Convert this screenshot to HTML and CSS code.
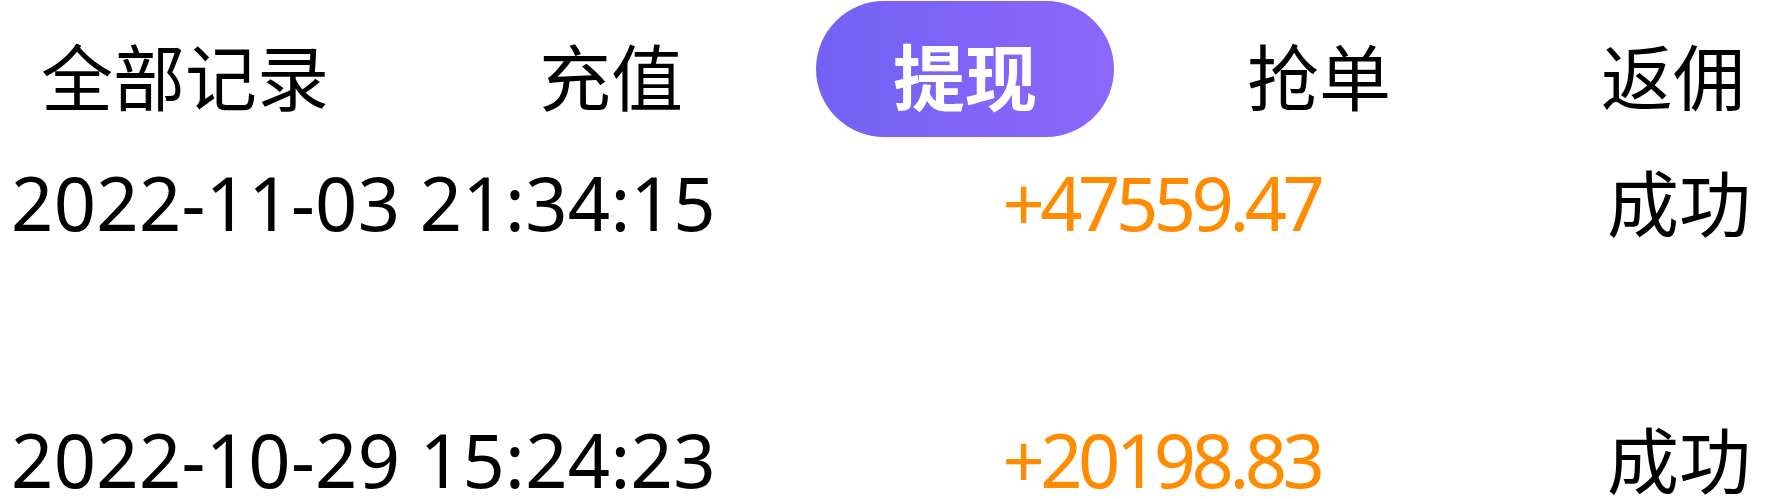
FILE: index.html
```html
<!DOCTYPE html>
<html lang="zh-CN">
<head>
<meta charset="utf-8">
<title>提现记录</title>
<link rel="stylesheet" href="styles.css">
</head>
<body>
<div class="page">
  <nav class="tabs">
    <span class="tab">全部记录</span>
    <span class="tab">充值</span>
    <span class="tab tab-active">提现</span>
    <span class="tab">抢单</span>
    <span class="tab">返佣</span>
  </nav>
  <div class="list">
    <div class="row">
      <span class="time">2022-11-03 21:34:15</span>
      <span class="amount">+47559.47</span>
      <span class="status">成功</span>
    </div>
    <div class="row">
      <span class="time">2022-10-29 15:24:23</span>
      <span class="amount">+20198.83</span>
      <span class="status">成功</span>
    </div>
  </div>
</div>
</body>
</html>
```

FILE: styles.css
```css
html, body {
  margin: 0;
  padding: 0;
  background: #ffffff;
}

body {
  font-family: "Noto Sans", "Noto Sans CJK SC", sans-serif;
  color: #000000;
}

.page {
  width: 1767px;
  height: 499px;
  overflow: hidden;
}

.tabs {
  display: flex;
  align-items: flex-start;
  gap: 210px;
  height: 138px;
  box-sizing: border-box;
  padding: 1px 0 0 41px;
  white-space: nowrap;
}

.tab {
  display: block;
  height: 120px;
  padding-top: 16px;
  line-height: 120px;
  font-size: 72px;
  color: #000000;
}

.tab-active {
  padding-left: 77px;
  padding-right: 77px;
  margin: 0 -77px;
  border-radius: 68px;
  background: linear-gradient(90deg, #7361f5 0%, #8d67fc 100%);
  color: #ffffff;
  font-weight: 700;
}

.list {
  display: flex;
  flex-direction: column;
  gap: 187px;
}

.row {
  display: flex;
  justify-content: space-between;
  align-items: baseline;
  padding: 0 16px 0 11px;
  line-height: 70px;
  white-space: nowrap;
}

.row:first-child {
  margin-top: 30px;
}

.time {
  font-size: 74px;
  letter-spacing: 0.3px;
  color: #000000;
}

.amount {
  font-size: 74px;
  letter-spacing: -4.5px;
  color: #ff8b00;
}

.status {
  font-size: 72px;
  color: #000000;
}
```
